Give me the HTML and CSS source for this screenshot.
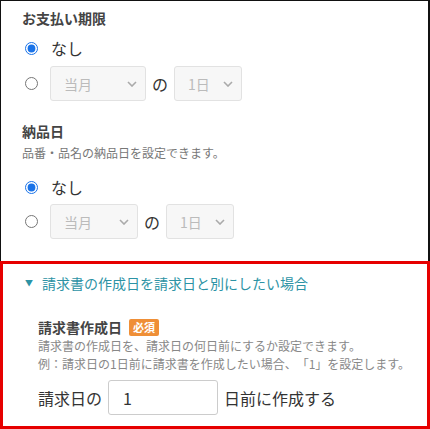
FILE: index.html
```html
<!DOCTYPE html>
<html lang="ja">
<head>
  <meta charset="UTF-8" />
  <meta name="viewport" content="width=device-width, initial-scale=1.0"/>
  <title>請求設定</title>
  <link rel="stylesheet" href="styles.css">
</head>
<body>
  <div class="panel">
    <section class="field">
      <h2 class="field-label">お支払い期限</h2>
      <label class="option">
        <input type="radio" name="pay" checked>
        <span class="option-text">なし</span>
      </label>
      <div class="option option-select">
        <input type="radio" name="pay">
        <div class="select month-wide">当月
          <svg class="chev" width="10" height="6" viewBox="0 0 10 6"><path d="M1 1l4 4 4-4" fill="none" stroke="#aaa" stroke-width="1.6"/></svg>
        </div>
        <span class="of">の</span>
        <div class="select day">1日
          <svg class="chev" width="10" height="6" viewBox="0 0 10 6"><path d="M1 1l4 4 4-4" fill="none" stroke="#aaa" stroke-width="1.6"/></svg>
        </div>
      </div>
    </section>

    <section class="field field-second">
      <h2 class="field-label">納品日</h2>
      <p class="field-help">品番・品名の納品日を設定できます。</p>
      <label class="option option-after-help">
        <input type="radio" name="delivery" checked>
        <span class="option-text">なし</span>
      </label>
      <div class="option option-select tight">
        <input type="radio" name="delivery">
        <div class="select month">当月
          <svg class="chev" width="10" height="6" viewBox="0 0 10 6"><path d="M1 1l4 4 4-4" fill="none" stroke="#aaa" stroke-width="1.6"/></svg>
        </div>
        <span class="of">の</span>
        <div class="select day">1日
          <svg class="chev" width="10" height="6" viewBox="0 0 10 6"><path d="M1 1l4 4 4-4" fill="none" stroke="#aaa" stroke-width="1.6"/></svg>
        </div>
      </div>
    </section>
  </div>

  <div class="advanced">
    <div class="toggle">
      <span class="caret">▼</span>
      <span>請求書の作成日を請求日と別にしたい場合</span>
    </div>
    <div class="adv-body">
      <h3 class="adv-label">請求書作成日 <span class="badge">必須</span></h3>
      <p class="adv-help">請求書の作成日を、請求日の何日前にするか設定できます。<br>例：請求日の1日前に請求書を作成したい場合、「1」を設定します。</p>
      <div class="days-row">
        <span>請求日の</span>
        <input class="days-input" type="text" value="1">
        <span>日前に作成する</span>
      </div>
    </div>
  </div>
</body>
</html>
```

FILE: styles.css
```css
* {
  box-sizing: border-box;
}

body {
  margin: 0;
  font-family: "Noto Sans CJK JP", "Noto Sans", sans-serif;
  color: #333;
  background: #fff;
  width: 430px;
  height: 429px;
  overflow: hidden;
  text-spacing-trim: space-all;
}

.panel {
  height: 261px;
  border-left: 1px solid #111;
  border-right: 2px solid #111;
  border-top: 1px solid #111;
  padding: 7px 0 0 21px;
}

.field-label {
  margin: 0;
  font-size: 14px;
  line-height: 20px;
  font-weight: bold;
  color: #444;
}

.option {
  display: flex;
  align-items: center;
  height: 24px;
  margin-top: 8px;
}

.option input[type="radio"] {
  width: 13px;
  height: 13px;
  margin: 0 13px 0 3px;
  accent-color: #1a73e8;
}

.option-text {
  font-size: 16px;
  line-height: 24px;
}

.option-select {
  height: 35px;
  margin-top: 6px;
}

.option-select input[type="radio"] {
  margin-right: 12px;
}

.select {
  height: 35px;
  display: flex;
  align-items: center;
  justify-content: space-between;
  padding: 0 8px 0 13px;
  background: #f7f7f7;
  border: 1px solid #e2e2e2;
  border-radius: 3px;
  color: #bbb;
  font-size: 14px;
}

.month-wide {
  width: 96px;
}

.month {
  width: 88px;
}

.day {
  width: 68px;
}

.of {
  font-size: 16px;
  margin: 0 6px;
}

.field-second {
  margin-top: 20px;
}

.field-help {
  margin: 3px 0 0;
  font-size: 12px;
  line-height: 18px;
  color: #777;
}

.option-after-help {
  margin-top: 13px;
}

.tight {
  margin-top: 5px;
}

.advanced {
  height: 168px;
  border: 3px solid #e60000;
  padding: 9px 0 0 22px;
}

.toggle {
  display: flex;
  align-items: center;
  font-size: 14px;
  line-height: 20px;
  color: #2d93a5;
}

.caret {
  font-size: 8px;
  margin-right: 9px;
}

.adv-body {
  padding-left: 13px;
  margin-top: 24px;
}

.adv-label {
  margin: 0;
  font-size: 14px;
  line-height: 20px;
  font-weight: bold;
  color: #444;
  display: flex;
  align-items: center;
}

.badge {
  margin-left: 7px;
  background: #ef8f37;
  color: #fff;
  font-size: 11px;
  line-height: 17px;
  padding: 0 4px;
  border-radius: 2px;
}

.adv-help {
  margin: 0;
  font-size: 12px;
  line-height: 18px;
  color: #888;
}

.days-row {
  display: flex;
  align-items: center;
  gap: 6px;
  margin-top: 7px;
  font-size: 16px;
}

.days-input {
  width: 110px;
  height: 35px;
  border: 1px solid #ccc;
  border-radius: 3px;
  padding: 0 14px;
  font-family: inherit;
  font-size: 16px;
  color: #333;
}
```
